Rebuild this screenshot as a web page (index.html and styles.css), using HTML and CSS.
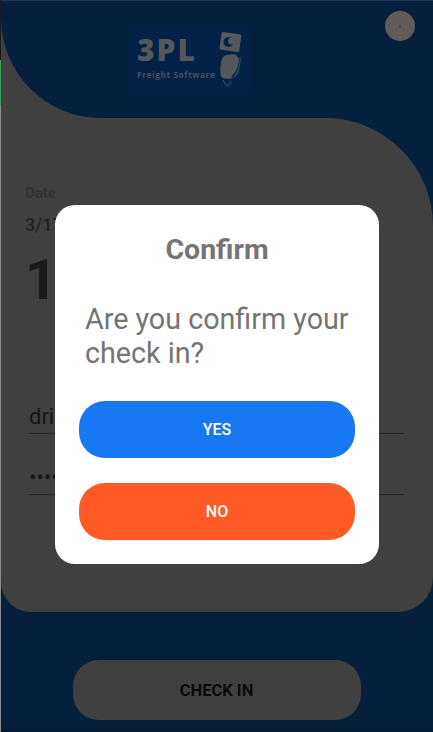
FILE: index.html
```html
<!DOCTYPE html>
<html lang="en">
<head>
<meta charset="utf-8">
<title>Check in</title>
<link rel="stylesheet" href="styles.css">
</head>
<body>
<div class="shell">
  <div class="edge">
    <div class="edge-dark"></div>
    <div class="edge-green"></div>
    <div class="edge-grey"></div>
  </div>
  <main class="app">
    <div class="top">
      <header class="header">
        <div class="logo">
          <div class="logo-words">
            <div class="logo-name">3PL</div>
            <div class="logo-sub">Freight Software</div>
          </div>
          <svg class="logo-icon" width="30" height="56" viewBox="0 0 30 56">
            <rect x="5.500" y="2" width="20" height="18" rx="2" transform="rotate(8 15 10)" fill="#54585c"/>
            <circle cx="13.500" cy="11" r="5" fill="#032146"/>
            <circle cx="16.500" cy="10" r="3.400" fill="#54585c"/>
            <path d="M8 26c4-3.500 12-3.500 15-1 3 3 2.500 12 0 17-2 3.500-5 5-9 6-4 .5-7-1-8-3-1.500-5-.5-15 2-19z" fill="#54585c"/>
            <path d="M22 24c3.500 1 3.500 6 2 11-1.500 5-4 8.500-7 11" fill="none" stroke="#032146" stroke-width="2"/>
            <path d="M25 26c1 6-2 15-6 20" fill="none" stroke="#2b5a68" stroke-width="1"/>
            <path d="M8 49c1 3 3 5 5 6 1-1 2.500-3 3-5" fill="none" stroke="#1d5260" stroke-width="1.200"/>
          </svg>
        </div>
        <button class="avatar" type="button" aria-label="Profile"><span class="avatar-dot"></span></button>
      </header>
    </div>
    <section class="panel">
      <div class="label">Date</div>
      <div class="date">3/17/2021</div>
      <div class="time">10:30 AM</div>
      <div class="field field-user">driver</div>
      <div class="field field-pass">••••••••</div>
    </section>
    <div class="footer">
      <button class="checkin" type="button">CHECK IN</button>
    </div>
  </main>
</div>
<div class="modal-layer">
  <div class="modal" role="dialog">
    <h2 class="modal-title">Confirm</h2>
    <p class="modal-text">Are you confirm your check in?</p>
    <button class="modal-btn btn-yes" type="button">YES</button>
    <button class="modal-btn btn-no" type="button">NO</button>
  </div>
</div>
</body>
</html>
```
FILE: styles.css
```css
* { box-sizing: border-box; }
html, body { margin: 0; height: 100%; }
body {
  width: 433px;
  height: 732px;
  overflow: hidden;
  position: relative;
  font-family: Roboto, "Liberation Sans", sans-serif;
  background: #05203d;
}
button { font-family: inherit; border: 0; padding: 0; }
.shell { display: flex; height: 732px; }
.edge { width: 1px; flex: none; display: flex; flex-direction: column; }
.edge-dark { height: 60px; background: #1a1a1a; }
.edge-green { height: 45px; background: #2fa24f; }
.edge-grey { flex: 1; background: #8c8c8c; }
.app {
  flex: 1;
  min-width: 0;
  display: flex;
  flex-direction: column;
  background: #05203d;
  border-top: 1px solid #1c3756;
  border-bottom: 3px solid #031a33;
}
.top { height: 117px; background: #404040; flex: none; }
.header {
  height: 100%;
  background: #05203d;
  border-bottom-left-radius: 100px;
  display: flex;
  justify-content: space-between;
  align-items: flex-start;
  padding: 10px 18px 0 129px;
}
.logo {
  width: 121px;
  height: 70px;
  margin-top: 14px;
  background: #032146;
  display: flex;
  align-items: flex-start;
  padding: 6px 0 0 7px;
  gap: 3px;
}
.logo-words { padding-top: 5px; width: 74px; flex: none; }
.logo-name {
  font-family: "Open Sans", sans-serif;
  font-weight: 800;
  font-size: 30px;
  line-height: 27px;
  letter-spacing: 2px;
  color: #54585c;
}
.logo-sub {
  font-family: "Open Sans", sans-serif;
  font-weight: 700;
  font-size: 8.300px;
  line-height: 11px;
  margin-top: 6px;
  letter-spacing: .6px;
  white-space: nowrap;
  color: #494f58;
}
.logo-icon { flex: none; margin-left: 1px; }
.avatar {
  width: 30px;
  height: 30px;
  border-radius: 50%;
  background: #5f5c59;
  display: flex;
  align-items: center;
  justify-content: center;
  flex: none;
}
.avatar-dot { width: 2px; height: 3px; background: #6b3b3b; }
.panel {
  height: 494px;
  flex: none;
  background: #404040;
  border-radius: 0 108px 35px 30px;
  padding: 66px 29px 0 24px;
  display: flex;
  flex-direction: column;
}
.label { font-size: 15px; line-height: 18px; font-weight: 700; color: #323232; }
.date { margin-top: 12px; font-size: 18px; line-height: 21px; font-weight: 500; color: #222; }
.time { margin-top: 14px; font-size: 56px; line-height: 62px; font-weight: 700; color: #1a1a1a; white-space: nowrap; }
.field {
  margin-left: 4px;
  font-size: 22px;
  border-bottom: 1px solid #222;
  color: #161616;
  padding-bottom: 3px;
  line-height: 26px;
}
.field-user { margin-top: 93px; }
.field-pass { margin-top: 31px; letter-spacing: 0; }
.footer { flex: 1; display: flex; justify-content: center; padding: 48px 1px 0 0; }
.checkin {
  width: 288px;
  height: 60px;
  border-radius: 26px;
  background: #404040;
  color: #0a0a0a;
  font-size: 16.500px;
  font-weight: 700;
}
.modal-layer {
  position: absolute;
  inset: 0;
  display: flex;
  justify-content: center;
  align-items: flex-start;
  padding-top: 205px;
}
.modal {
  width: 324px;
  height: 359px;
  margin-left: 1px;
  background: #fff;
  border-radius: 20px;
  padding: 28px 24px 0;
  display: flex;
  flex-direction: column;
}
.modal-title {
  margin: 0;
  text-align: center;
  font-size: 28.500px;
  line-height: 34px;
  font-weight: 700;
  color: #757575;
}
.modal-text {
  margin: 35px 0 0;
  padding: 0 0 0 6px;
  font-size: 28.700px;
  line-height: 34px;
  font-weight: 400;
  color: #757575;
}
.modal-btn {
  height: 57px;
  border-radius: 26px;
  color: #fff;
  font-size: 16px;
  font-weight: 500;
  flex: none;
}
.btn-yes { margin-top: 31px; background: #1877f2; }
.btn-no { margin-top: 25px; background: #ff5a26; }
```
